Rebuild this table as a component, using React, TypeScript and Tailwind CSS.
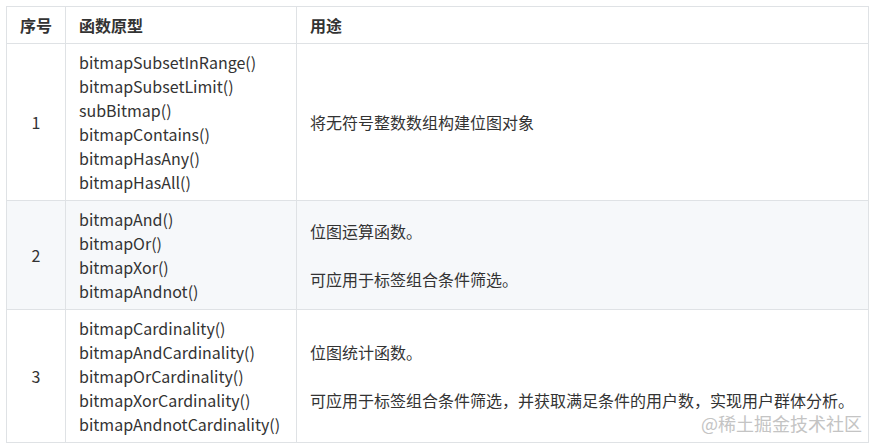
import React from "react";

const rows = [
  {
    n: "1",
    fns: [
      "bitmapSubsetInRange()",
      "bitmapSubsetLimit()",
      "subBitmap()",
      "bitmapContains()",
      "bitmapHasAny()",
      "bitmapHasAll()",
    ],
    desc: ["将无符号整数数组构建位图对象"],
    bg: "bg-white",
  },
  {
    n: "2",
    fns: ["bitmapAnd()", "bitmapOr()", "bitmapXor()", "bitmapAndnot()"],
    desc: ["位图运算函数。", "可应用于标签组合条件筛选。"],
    bg: "bg-[#f6f8fa]",
  },
  {
    n: "3",
    fns: [
      "bitmapCardinality()",
      "bitmapAndCardinality()",
      "bitmapOrCardinality()",
      "bitmapXorCardinality()",
      "bitmapAndnotCardinality()",
    ],
    desc: [
      "位图统计函数。",
      "可应用于标签组合条件筛选，并获取满足条件的用户数，实现用户群体分析。",
    ],
    bg: "bg-white",
  },
];

export default function App() {
  return (
    <div className="relative w-[875px] h-[448px] bg-white text-[#333] pt-[6px] pl-[6px] font-['Noto_Sans_CJK_SC',sans-serif]">
      <table className="table-fixed w-[862px] border-collapse text-[16px] leading-[24px]">
        <colgroup>
          <col className="w-[59px]" />
          <col className="w-[231px]" />
          <col className="w-[572px]" />
        </colgroup>
        <thead>
          <tr className="bg-white">
            <th className="border border-[#dfe2e5] px-[13px] py-[6px] font-bold text-center">序号</th>
            <th className="border border-[#dfe2e5] px-[13px] py-[6px] font-bold text-left">函数原型</th>
            <th className="border border-[#dfe2e5] px-[13px] py-[6px] font-bold text-left">用途</th>
          </tr>
        </thead>
        <tbody>
          {rows.map((r) => (
            <tr key={r.n} className={r.bg}>
              <td className="border border-[#dfe2e5] px-[13px] py-[6px] text-center align-middle">{r.n}</td>
              <td className="border border-[#dfe2e5] px-[13px] py-[6px] align-middle">
                {r.fns.map((f) => (
                  <div key={f}>{f}</div>
                ))}
              </td>
              <td className="border border-[#dfe2e5] px-[13px] py-[6px] align-middle">
                {r.desc.map((d, i) => (
                  <div key={i} className={i > 0 ? "mt-[24px]" : ""}>
                    {d}
                  </div>
                ))}
              </td>
            </tr>
          ))}
        </tbody>
      </table>
      <div className="absolute right-[13px] top-[410px] text-[18px] leading-[26px] text-[#c4c4c4]">
        @稀土掘金技术社区
      </div>
    </div>
  );
}
